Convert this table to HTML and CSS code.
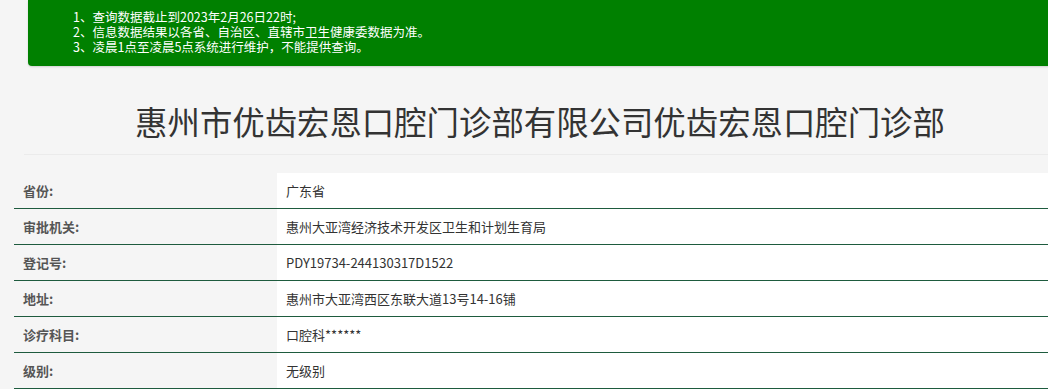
FILE: index.html
```html
<!DOCTYPE html>
<html lang="zh-CN">
<head>
<meta charset="utf-8">
<title>惠州市优齿宏恩口腔门诊部有限公司优齿宏恩口腔门诊部</title>
<link rel="stylesheet" href="styles.css">
</head>
<body>
<div class="page">
  <div class="notice">
    <p>1、查询数据截止到2023年2月26日22时;</p>
    <p>2、信息数据结果以各省、自治区、直辖市卫生健康委数据为准。</p>
    <p>3、凌晨1点至凌晨5点系统进行维护，不能提供查询。</p>
  </div>
  <h1 class="title">惠州市优齿宏恩口腔门诊部有限公司优齿宏恩口腔门诊部</h1>
  <div class="table">
    <div class="row"><div class="label">省份:</div><div class="value">广东省</div></div>
    <div class="row"><div class="label">审批机关:</div><div class="value">惠州大亚湾经济技术开发区卫生和计划生育局</div></div>
    <div class="row"><div class="label">登记号:</div><div class="value">PDY19734-244130317D1522</div></div>
    <div class="row"><div class="label">地址:</div><div class="value">惠州市大亚湾西区东联大道13号14-16铺</div></div>
    <div class="row"><div class="label">诊疗科目:</div><div class="value">口腔科******</div></div>
    <div class="row"><div class="label">级别:</div><div class="value">无级别</div></div>
  </div>
</div>
</body>
</html>
```

FILE: styles.css
```css
html, body {
  margin: 0;
  padding: 0;
  overflow: hidden;
  background: #f5f5f5;
}
body {
  font-family: "Noto Sans CJK SC", "Noto Sans", sans-serif;
  color: #333;
}
.page {
  width: 1052px;
  margin-left: 14px;
}
.notice {
  margin-left: 14px;
  background: #008000;
  color: #fff;
  padding: 9px 0 12px 45px;
  border-bottom-left-radius: 4px;
  box-shadow: 0 1px 2px rgba(0,0,0,0.15);
  font-size: 12.5px;
  line-height: 15px;
}
.notice p {
  margin: 0;
  height: 15px;
}
.title {
  margin: 0 10px;
  padding: 35px 0 13px;
  font-size: 32.4px;
  line-height: 40px;
  font-weight: normal;
  text-align: center;
  color: #333;
  border-bottom: 1px solid #ebebeb;
}
.table {
  margin-top: 18px;
}
.row {
  display: flex;
  border-bottom: 1px solid #1e5b3e;
}
.label {
  width: 254px;
  flex: none;
  padding-left: 9px;
  height: 35px;
  line-height: 35px;
  font-size: 13px;
  font-weight: bold;
  color: #555;
}
.value {
  flex: 1;
  padding-left: 9px;
  height: 35px;
  line-height: 35px;
  font-size: 13px;
  color: #333;
  background: #fff;
}
```
